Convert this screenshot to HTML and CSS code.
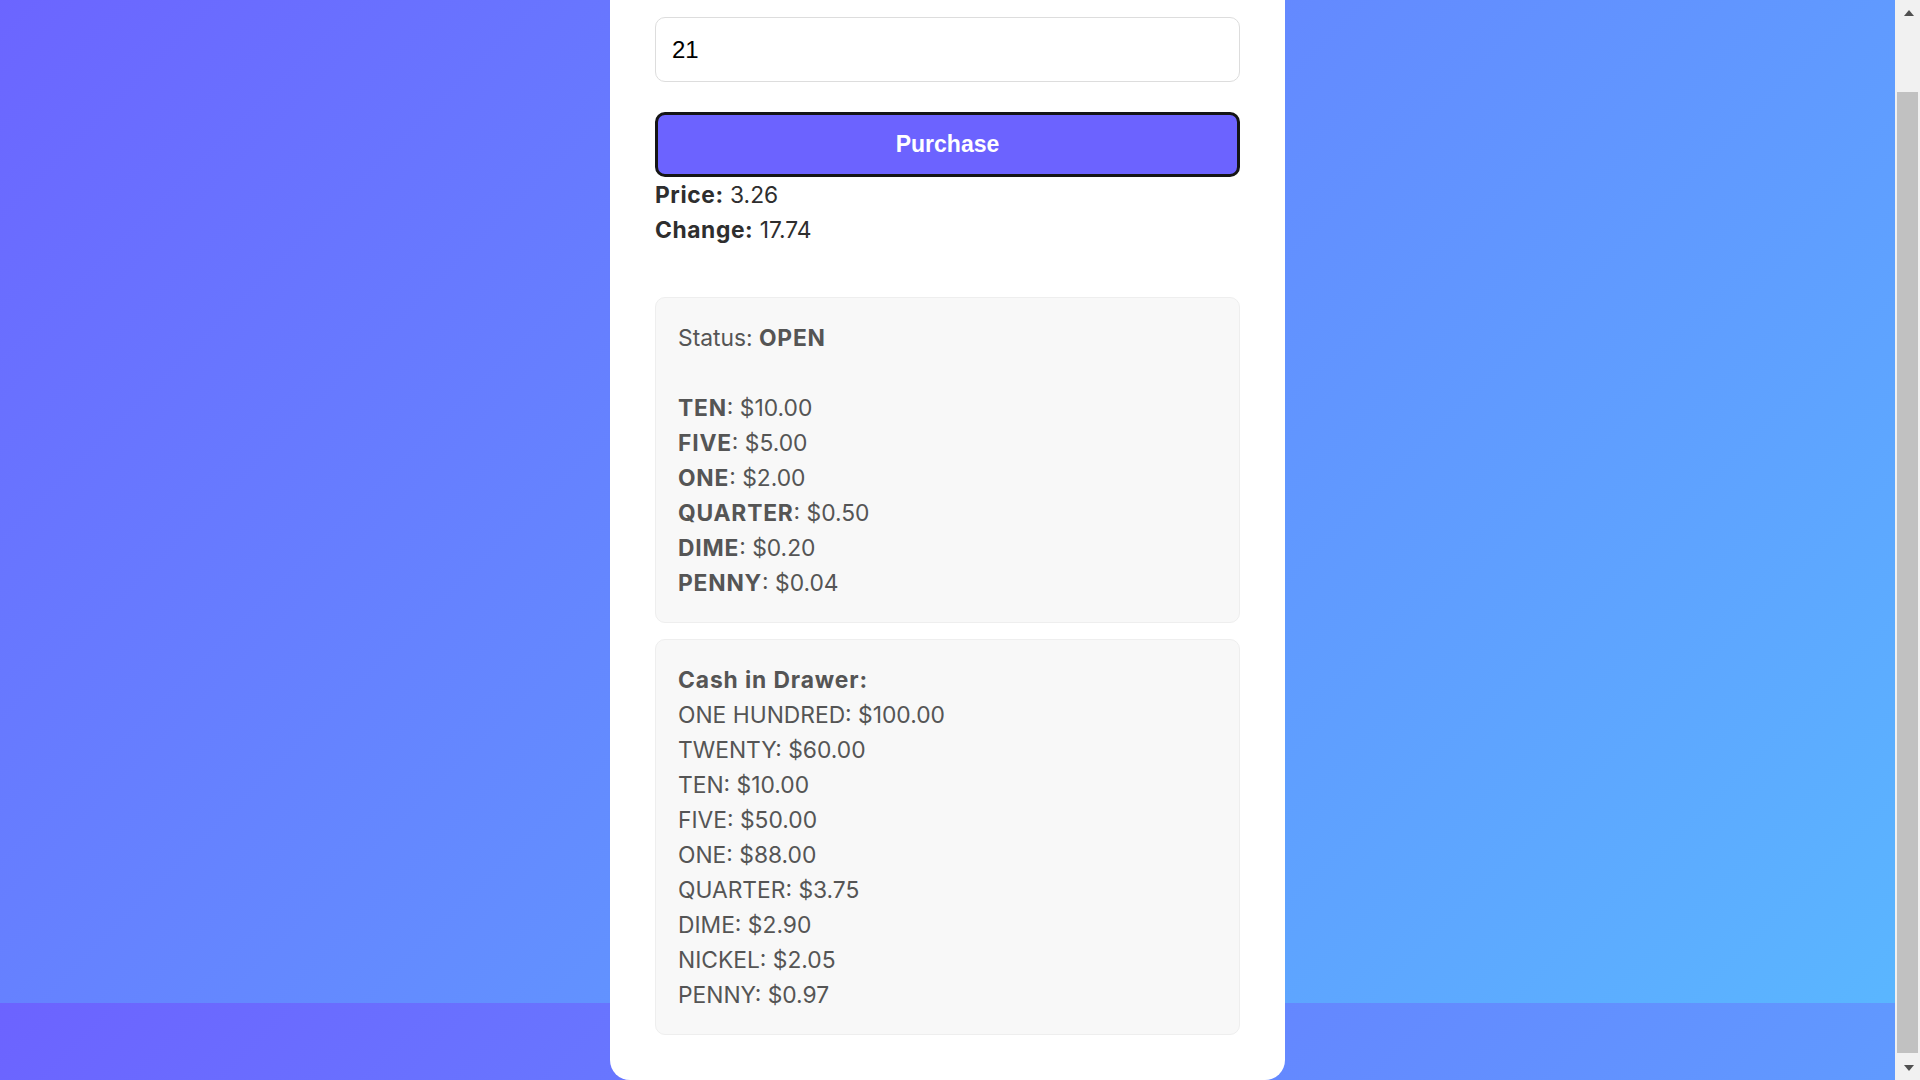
FILE: index.html
```html
<!DOCTYPE html>
<html lang="en">
<head>
<meta charset="utf-8">
<title>Cash Register</title>
<link rel="stylesheet" href="styles.css">
</head>
<body>
<main class="page">
  <section class="card">
    <input class="cash-input" type="number" value="21" aria-label="Cash from customer">
    <button class="purchase-btn" type="button">Purchase</button>
    <div class="totals">
      <div class="total-line"><strong>Price:</strong> 3.26</div>
      <div class="total-line"><strong>Change:</strong> 17.74</div>
    </div>
    <div class="panel change-due">
      <p class="line">Status: <strong>OPEN</strong></p>
      <p class="line blank">&nbsp;</p>
      <p class="line"><strong>TEN</strong>: $10.00</p>
      <p class="line"><strong>FIVE</strong>: $5.00</p>
      <p class="line"><strong>ONE</strong>: $2.00</p>
      <p class="line"><strong>QUARTER</strong>: $0.50</p>
      <p class="line"><strong>DIME</strong>: $0.20</p>
      <p class="line"><strong>PENNY</strong>: $0.04</p>
    </div>
    <div class="panel drawer">
      <p class="line drawer-title">Cash in Drawer:</p>
      <p class="line">ONE HUNDRED: $100.00</p>
      <p class="line">TWENTY: $60.00</p>
      <p class="line">TEN: $10.00</p>
      <p class="line">FIVE: $50.00</p>
      <p class="line">ONE: $88.00</p>
      <p class="line">QUARTER: $3.75</p>
      <p class="line">DIME: $2.90</p>
      <p class="line">NICKEL: $2.05</p>
      <p class="line">PENNY: $0.97</p>
    </div>
  </section>
</main>
<aside class="scrollbar" aria-hidden="true">
  <div class="sb-btn"><span class="arrow-up"></span></div>
  <div class="sb-track">
    <div class="sb-thumb"></div>
  </div>
  <div class="sb-btn"><span class="arrow-down"></span></div>
</aside>
</body>
</html>
```

FILE: styles.css
```css
html,
body {
  height: 100%;
}

body {
  margin: 0;
  display: flex;
  overflow: hidden;
  font-family: "Inter", "Noto Sans", sans-serif;
  background: #f1f1f1;
}

.page {
  flex: 1;
  height: 1080px;
  background-image: linear-gradient(135deg, #6c63ff 0%, #5ab6ff 100%);
  background-size: 100% 1080px;
  background-position: 0 -77px;
  background-repeat: repeat-y;
}

.card {
  box-sizing: border-box;
  width: 675px;
  margin: 0 auto;
  padding: 17px 45px 45px;
  background: #ffffff;
  border-radius: 0 0 20px 20px;
  display: flex;
  flex-direction: column;
}

.cash-input {
  box-sizing: border-box;
  width: 100%;
  height: 65px;
  padding: 0 16px;
  border: 1px solid #dddddd;
  border-radius: 10px;
  font-family: "Liberation Sans", Arial, sans-serif;
  font-size: 24px;
  color: #000;
  background: #fff;
  outline: none;
  -moz-appearance: textfield;
}

.cash-input::-webkit-outer-spin-button,
.cash-input::-webkit-inner-spin-button {
  -webkit-appearance: none;
  margin: 0;
}

.purchase-btn {
  box-sizing: border-box;
  width: 100%;
  height: 65px;
  margin-top: 30px;
  border: 3px solid #151515;
  border-radius: 10px;
  background: #6c63ff;
  color: #fff;
  font-family: "Liberation Sans", Arial, sans-serif;
  font-weight: 700;
  font-size: 23px;
  cursor: pointer;
}

.totals {
  margin-bottom: 50px;
  color: #2e2e2e;
  font-size: 22.8px;
  line-height: 35px;
}

.totals strong {
  font-weight: 700;
  letter-spacing: 0.6px;
}

.panel {
  background: #f8f8f8;
  border: 1px solid #eeeeee;
  border-radius: 10px;
  padding: 22px;
  color: #555555;
  font-size: 22.8px;
  line-height: 35px;
}

.panel strong {
  font-weight: 700;
  letter-spacing: 0.8px;
}

.drawer {
  margin-top: 16px;
}

.line {
  margin: 0;
}

.drawer-title {
  font-weight: 700;
  letter-spacing: 0.9px;
}

/* window scrollbar */
.scrollbar {
  width: 25px;
  height: 1080px;
  display: flex;
  flex-direction: column;
  background: #f1f1f1;
}

.sb-btn {
  height: 25px;
  display: flex;
  align-items: center;
  justify-content: center;
  padding-left: 2px;
}

.arrow-up,
.arrow-down {
  width: 0;
  height: 0;
  border-left: 5.5px solid transparent;
  border-right: 5.5px solid transparent;
}

.arrow-up {
  border-bottom: 6px solid #505050;
}

.arrow-down {
  border-top: 6px solid #505050;
}

.sb-track {
  flex: 1;
  display: flex;
  flex-direction: column;
  justify-content: flex-end;
  padding: 0 2px 2px 2px;
}

.sb-thumb {
  height: 961px;
  background: #c1c1c1;
}
```
